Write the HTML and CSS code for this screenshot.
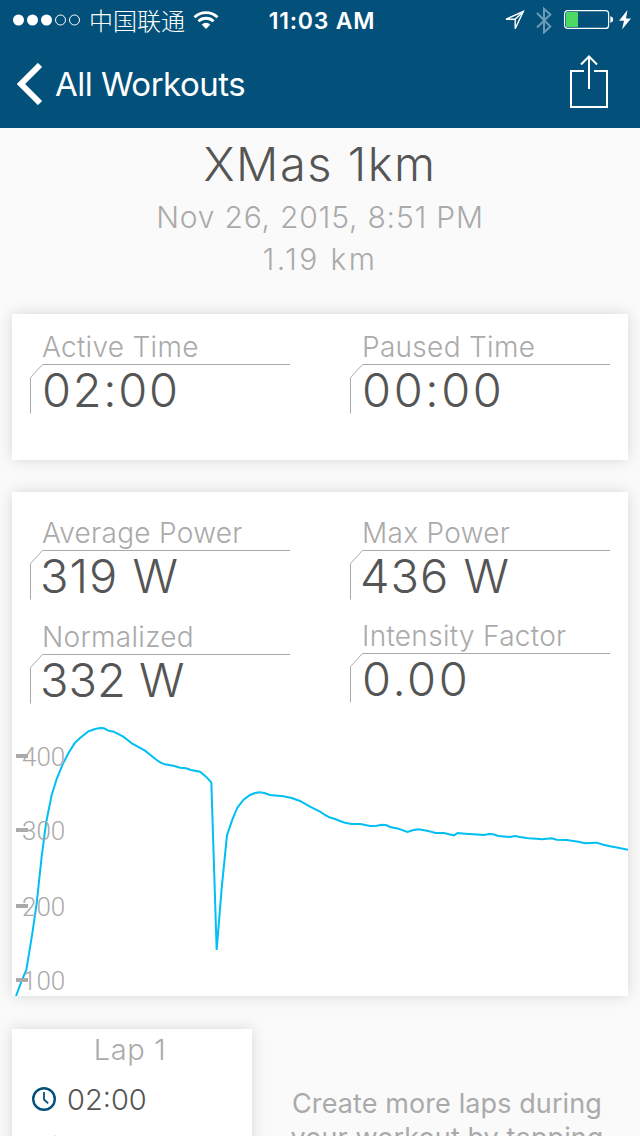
FILE: index.html
```html
<!DOCTYPE html>
<html lang="en">
<head>
  <meta charset="utf-8">
  <title>XMas 1km</title>
  <link rel="stylesheet" href="styles.css">
</head>
<body>
  <header class="header">
    <div class="status-bar">
      <div class="status-left">
        <svg class="signal" width="68" height="12" viewBox="0 0 68 12" fill="#fff">
          <circle cx="5.5" cy="6" r="5.5"/>
          <circle cx="19.5" cy="6" r="5.5"/>
          <circle cx="33.500" cy="6" r="5.5"/>
          <circle cx="47.5" cy="6" r="5" fill="none" stroke="#fff"/>
          <circle cx="61.5" cy="6" r="5" fill="none" stroke="#fff"/>
        </svg>
        <span class="carrier">中国联通</span>
        <svg width="26" height="18" viewBox="0 0 26 18" fill="none" stroke="#fff" stroke-width="2.8">
          <path d="M1.5 6.3a16.5 16.5 0 0 1 23 0"/>
          <path d="M5.4 10.3a11 11 0 0 1 15.2 0"/>
          <path d="M13 18l-4.3-4.4a6.2 6.2 0 0 1 8.6 0z" fill="#fff" stroke="none"/>
        </svg>
      </div>
      <div class="clock">11:03 AM</div>
      <div class="status-right">
        <svg width="21" height="21" viewBox="0 0 21 21" fill="none" stroke="#fff" stroke-width="1.4">
          <path d="M19.300 1.500L2 9.200h9.200v9.500z"/>
          <path d="M19.300 1.500l-8.100 7.700"/>
        </svg>
        <svg class="bluetooth" width="16" height="27" viewBox="0 0 16 27" fill="none" stroke="#6d9bb7" stroke-width="2">
          <path d="M1 6l13.300 13.500L8 25.500V1.800l6.300 5.700L1 20.500"/>
        </svg>
        <svg class="battery" width="50" height="20" viewBox="0 0 50 20">
          <rect x=".6" y=".6" width="44" height="17.8" rx="3" fill="none" stroke="#fff" stroke-width="1.2"/>
          <rect x="2" y="2" width="12" height="15" rx="1" fill="#4cd964"/>
          <path d="M46.3 6.2q2.8.6 2.8 3.3t-2.800 3.300z" fill="#fff"/>
        </svg>
        <svg width="12" height="20" viewBox="0 0 12 20" fill="#fff">
          <path d="M8.5 0L0 10.8h5L3 19.5 12 8.4H7z"/>
        </svg>
      </div>
    </div>
    <nav class="nav">
      <a class="back">
        <svg width="26" height="42" viewBox="0 0 26 42" fill="none" stroke="#fff" stroke-width="6">
          <path d="M23 2L4 21l19 19"/>
        </svg>
        <span>All Workouts</span>
      </a>
      <svg class="share" width="38" height="53" viewBox="0 0 38 53" fill="none" stroke="#fff" stroke-width="2">
        <path d="M14 16H1v36h36V16H24"/>
        <path d="M19 34V1.5M11 9.5l8-8 8 8"/>
      </svg>
    </nav>
  </header>

  <section class="summary">
    <h1>XMas 1km</h1>
    <p class="date">Nov 26, 2015, 8:51 PM</p>
    <p class="distance">1.19 km</p>
  </section>

  <section class="card time-card">
    <div class="stats">
      <div class="stat">
        <div class="stat-label">Active Time</div>
        <div class="stat-value round">
          <svg class="bracket" viewBox="0 0 260 50"><path d="M.5 49.5V13.5l12-13H260"/></svg>
          02:00
        </div>
      </div>
      <div class="stat">
        <div class="stat-label">Paused Time</div>
        <div class="stat-value round wide">
          <svg class="bracket" viewBox="0 0 260 50"><path d="M.5 49.5V13.5l12-13H260"/></svg>
          00:00
        </div>
      </div>
    </div>
  </section>

  <section class="card power-card">
    <div class="stats">
      <div class="stat">
        <div class="stat-label">Average Power</div>
        <div class="stat-value">
          <svg class="bracket" viewBox="0 0 260 50"><path d="M.5 49.5V13.5l12-13H260"/></svg>
          319 W
        </div>
      </div>
      <div class="stat">
        <div class="stat-label">Max Power</div>
        <div class="stat-value">
          <svg class="bracket" viewBox="0 0 260 50"><path d="M.5 49.5V13.5l12-13H260"/></svg>
          436 W
        </div>
      </div>
      <div class="stat">
        <div class="stat-label">Normalized</div>
        <div class="stat-value tight">
          <svg class="bracket" viewBox="0 0 260 50"><path d="M.5 49.5V13.5l12-13H260"/></svg>
          332 W
        </div>
      </div>
      <div class="stat raised">
        <div class="stat-label">Intensity Factor</div>
        <div class="stat-value round wide">
          <svg class="bracket" viewBox="0 0 260 50"><path d="M.5 49.5V13.5l12-13H260"/></svg>
          0.00
        </div>
      </div>
    </div>
    <svg class="chart" width="616" height="282" viewBox="0 0 616 282">
      <g transform="translate(-12 1) scale(.33333)">
        <polyline class="power-line" points="48,843 66,795 79,765 97,655 110,565 118,490 125,425 138,325 155,240 170,192 188,148 205,115 225,83 240,69 264,50 285,42 300,39 312,40 325,47 341,50 370,65 397,86 435,107 470,135 482,143 495,148 523,153 540,158 558,160 573,165 600,170 618,185 634,202 650,705 665,520 681,361 697,314 712,278 730,255 750,240 765,234 778,232 793,234 810,240 850,244 875,249 900,258 930,275 960,290 975,300 988,307 1005,312 1020,318 1035,323 1055,327 1082,327 1095,330 1110,333 1130,332 1147,329 1160,331 1170,336 1195,341 1222,351 1238,346 1255,343 1285,348 1307,354 1332,354 1347,358 1362,361 1373,354 1395,356 1420,358 1452,360 1467,357 1480,358 1495,363 1530,366 1545,363 1560,366 1585,370 1610,371 1625,373 1655,370 1670,374 1700,375 1735,380 1755,385 1790,383 1810,389 1830,394 1855,398 1884,404"/>
      </g>
      <g class="ticks">
        <path d="M4 42h12M4 116h12M4 192h12M4 266h12"/>
      </g>
      <g class="axis-labels">
        <text x="10" y="52">400</text>
        <text x="10" y="126">300</text>
        <text x="10" y="202">200</text>
        <text x="10" y="276">100</text>
      </g>
    </svg>
  </section>

  <section class="laps">
    <div class="card lap">
      <h2>Lap 1</h2>
      <div class="lap-row">
        <svg width="24" height="24" viewBox="0 0 24 24" fill="none" stroke="#03517a">
          <circle cx="12" cy="12" r="10.8" stroke-width="2.4"/>
          <path d="M12 5v7.500l4.200 3.800" stroke-width="1.8"/>
        </svg>
        <span>02:00</span>
      </div>
      <div class="lap-row">
        <svg width="24" height="24" viewBox="0 0 24 24" fill="#03517a">
          <path d="M23.500 0L5 13h6.500L8 24l12-14h-6z"/>
        </svg>
      </div>
    </div>
    <p class="hint">Create more laps during<br>your workout by tapping</p>
  </section>
</body>
</html>
```

FILE: styles.css
```css
* {
  margin: 0;
  padding: 0;
  box-sizing: border-box;
}

body {
  width: 640px;
  height: 1136px;
  overflow: hidden;
  font-family: Inter, 'Liberation Sans', sans-serif;
  background: #fafafa;
  color: #555;
}

svg {
  display: block;
  flex-shrink: 0;
}

.header {
  height: 128px;
  background: #03517a;
  color: #fff;
}

.status-bar {
  display: grid;
  grid-template-columns: 1fr auto 1fr;
  align-items: center;
  height: 40px;
  padding: 0 9px 0 13px;
}

.status-left,
.status-right {
  display: flex;
  align-items: center;
}

.status-left {
  gap: 8px;
}

.status-right {
  justify-content: flex-end;
}

.carrier {
  font-family: 'Noto Sans CJK SC', sans-serif;
  font-size: 24px;
  font-weight: 300;
  line-height: 40px;
}

.clock {
  padding-top: 1px;
  font-size: 23px;
  font-weight: 600;
  letter-spacing: 0.8px;
}

.bluetooth {
  margin: 0 12px 0 11px;
}

.battery {
  margin-right: 5px;
}

.nav {
  display: flex;
  align-items: center;
  justify-content: space-between;
  height: 88px;
  padding: 0 32px 0 17px;
}

.back {
  display: flex;
  align-items: center;
  gap: 12px;
  font-size: 33px;
  letter-spacing: -0.5px;
}

.share {
  margin-bottom: 5px;
}

.summary {
  height: 186px;
  padding-top: 4px;
  text-align: center;
  font-weight: 300;
}

.summary h1 {
  font-size: 47px;
  font-weight: 300;
  line-height: 64px;
  letter-spacing: 1.5px;
}

.summary p {
  font-size: 30px;
  line-height: 42px;
  color: #aaa;
}

.summary .date {
  letter-spacing: 0.8px;
}

.summary .distance {
  letter-spacing: 2.4px;
}

.card {
  margin: 0 12px;
  background: #fff;
  box-shadow: 0 0 14px rgba(0, 0, 0, 0.14);
}

.time-card {
  height: 146px;
  padding-top: 16px;
}

.power-card {
  height: 504px;
  margin-top: 32px;
  padding-top: 24px;
}

.stats {
  display: grid;
  grid-template-columns: 260px 260px;
  column-gap: 60px;
  row-gap: 20px;
  padding-left: 18px;
}

.stat {
  height: 84px;
  font-weight: 300;
}

.stat.raised {
  margin-top: -1px;
}

.stat-label {
  padding-left: 12px;
  font-size: 28px;
  line-height: 34px;
  letter-spacing: 0.3px;
  color: #aaa;
}

.stat-value {
  position: relative;
  height: 50px;
  padding-left: 10px;
  font-size: 47px;
  line-height: 52px;
  letter-spacing: 1px;
}

.stat-value.round {
  padding-left: 12px;
  letter-spacing: 1.7px;
}

.stat-value.wide {
  letter-spacing: 2.6px;
}

.stat-value.tight {
  letter-spacing: 0;
}

/* Angled rule between a label and its value */
.bracket {
  position: absolute;
  top: 0;
  left: 0;
  width: 260px;
  height: 50px;
  fill: none;
  stroke: #aaa;
}

.chart {
  margin-top: 10px;
}

.power-line {
  fill: none;
  stroke: #00bff3;
  stroke-width: 6;
}

.ticks {
  stroke: #aaa;
  stroke-width: 4;
}

.axis-labels {
  font-family: Roboto, sans-serif;
  font-size: 26px;
  font-weight: 300;
  fill: #aaa;
}

.laps {
  display: flex;
  height: 107px;
  margin-top: 33px;
}

.lap {
  width: 240px;
  height: 260px;
  margin-right: 0;
}

.lap h2 {
  margin-bottom: 13px;
  padding-right: 4px;
  font-size: 29px;
  font-weight: 300;
  line-height: 41px;
  letter-spacing: 0.6px;
  text-align: center;
  color: #aaa;
}

.lap-row {
  display: flex;
  align-items: center;
  gap: 11px;
  height: 32px;
  margin-bottom: 16px;
  padding-left: 20px;
  font-size: 29px;
  font-weight: 350;
}

.hint {
  flex: 1;
  padding: 58px 0 0 2px;
  font-size: 27px;
  line-height: 34px;
  letter-spacing: 0.1px;
  text-align: center;
  color: #aaa;
}
```
